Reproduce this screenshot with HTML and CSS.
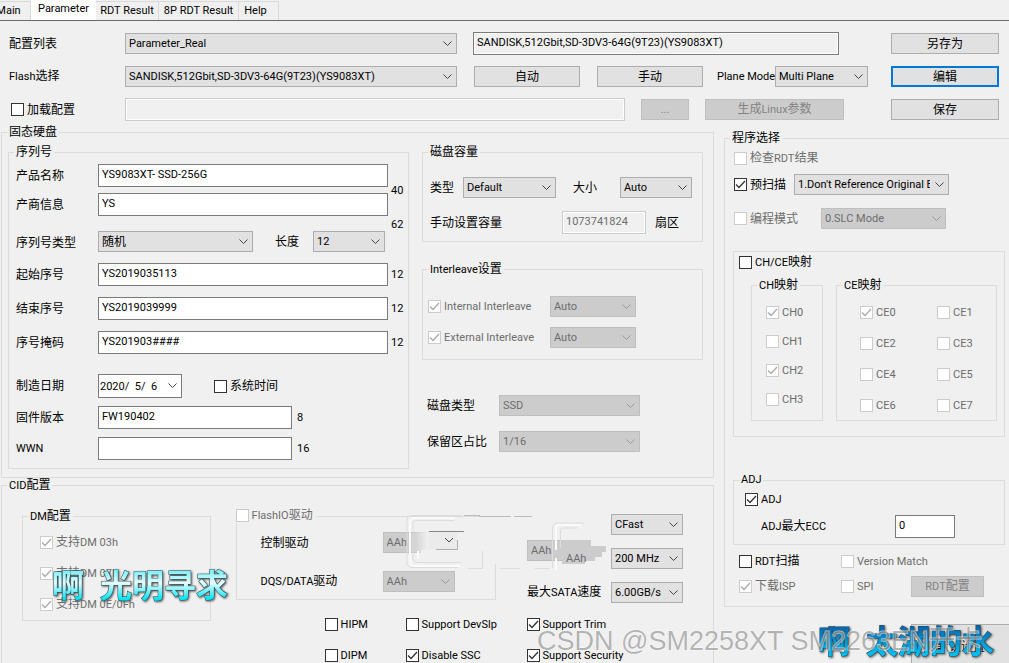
FILE: index.html
```html
<!DOCTYPE html>
<html lang="zh-CN">
<head>
<meta charset="utf-8">
<title>Parameter</title>
<link rel="stylesheet" href="styles.css">
</head>
<body>
<nav class="tabs">
  <button class="tab">Main</button>
  <button class="tab tab-active">Parameter</button>
  <button class="tab tab-rdt">RDT Result</button>
  <button class="tab tab-8p">8P RDT Result</button>
  <button class="tab tab-help">Help</button>
</nav>

<section class="toolbar">
  <div class="bar">
    <label class="bar-label zh" for="cfg">配置列表</label>
    <select class="bar-select" id="cfg"><option>Parameter_Real</option></select>
    <input class="bar-name plain" type="text" aria-label="Flash" value="SANDISK,512Gbit,SD-3DV3-64G(9T23)(YS9083XT)">
    <button class="btn btn-side zh">另存为</button>
  </div>
  <div class="bar">
    <label class="bar-label" for="flash">Flash<span class="zh">选择</span></label>
    <select class="bar-select" id="flash"><option>SANDISK,512Gbit,SD-3DV3-64G(9T23)(YS9083XT)</option></select>
    <div class="bar-group">
      <button class="btn btn-mode zh">自动</button>
      <button class="btn btn-mode zh">手动</button>
      <label class="plane-label" for="plane">Plane Mode</label>
      <select class="plane" id="plane"><option>Multi Plane</option></select>
    </div>
    <button class="btn btn-side btn-default zh">编辑</button>
  </div>
  <div class="bar">
    <label class="bar-label check zh"><input type="checkbox">加载配置</label>
    <input class="bar-path" type="text" aria-label="路径" disabled>
    <button class="btn btn-browse" disabled>...</button>
    <button class="btn btn-linux" disabled><span class="zh">生成</span>Linux<span class="zh">参数</span></button>
    <button class="btn btn-side zh">保存</button>
  </div>
</section>

<main class="main">
  <div class="left">
    <fieldset class="box ssd">
      <legend class="zh">固态硬盘</legend>
      <div class="ssd-grid">
        <fieldset class="box serial">
          <legend class="zh">序列号</legend>
          <div class="serial-grid">
            <label class="zh" for="product">产品名称</label>
            <input type="text" id="product" value="YS9083XT- SSD-256G">
            <label class="zh" for="vendor">产商信息</label>
            <input type="text" id="vendor" value="YS">
            <span class="count count-product">40</span>
            <span class="count count-vendor">62</span>
            <label class="zh" for="sntype">序列号类型</label>
            <div class="inline">
              <select class="sn-type zh" id="sntype"><option>随机</option></select>
              <label class="len-label zh" for="len">长度</label>
              <select class="w72" id="len"><option>12</option></select>
            </div>
            <label class="zh" for="start">起始序号</label>
            <input type="text" id="start" value="YS2019035113"><span class="count">12</span>
            <label class="zh" for="end">结束序号</label>
            <input type="text" id="end" value="YS2019039999"><span class="count">12</span>
            <label class="zh" for="mask">序号掩码</label>
            <input type="text" id="mask" value="YS201903####"><span class="count">12</span>
            <label class="zh" for="date">制造日期</label>
            <div class="inline">
              <input class="date" type="text" id="date" value="2020/  5/  6">
              <label class="check systime zh"><input type="checkbox">系统时间</label>
            </div>
            <label class="zh" for="fw">固件版本</label>
            <div class="inline"><input class="fw" type="text" id="fw" value="FW190402"><span class="fw-count">8</span></div>
            <label for="wwn">WWN</label>
            <div class="inline"><input class="fw" type="text" id="wwn"><span class="fw-count">16</span></div>
          </div>
        </fieldset>

        <div class="disk">
          <fieldset class="box capacity">
            <legend class="zh">磁盘容量</legend>
            <div class="inline">
              <label class="cap-type zh" for="captype">类型</label>
              <select class="w93" id="captype"><option>Default</option></select>
              <label class="cap-size zh" for="capsize">大小</label>
              <select class="w72" id="capsize"><option>Auto</option></select>
            </div>
            <div class="inline">
              <label class="cap-manual zh" for="sectors">手动设置容量</label>
              <input class="sectors" type="text" id="sectors" value="1073741824" disabled>
              <span class="zh">扇区</span>
            </div>
          </fieldset>
          <fieldset class="box interleave">
            <legend>Interleave<span class="zh">设置</span></legend>
            <div class="inline">
              <label class="check off"><input type="checkbox" checked disabled>Internal Interleave</label>
              <select class="w86" aria-label="Internal" disabled><option>Auto</option></select>
            </div>
            <div class="inline">
              <label class="check off"><input type="checkbox" checked disabled>External Interleave</label>
              <select class="w86" aria-label="External" disabled><option>Auto</option></select>
            </div>
          </fieldset>
          <div class="disk-extra">
            <label class="zh" for="dtype">磁盘类型</label>
            <select id="dtype" disabled><option>SSD</option></select>
            <label class="zh" for="reserve">保留区占比</label>
            <select id="reserve" disabled><option>1/16</option></select>
          </div>
        </div>
      </div>
    </fieldset>

    <fieldset class="box cid">
      <legend>CID<span class="zh">配置</span></legend>
      <div class="cid-grid">
        <fieldset class="box dm">
          <legend>DM<span class="zh">配置</span></legend>
          <label class="check off"><input type="checkbox" checked disabled><span><span class="zh">支持</span>DM 03h</span></label>
          <label class="check off"><input type="checkbox" checked disabled><span><span class="zh">支持</span>DM 07h</span></label>
          <label class="check off"><input type="checkbox" checked disabled><span><span class="zh">支持</span>DM 0E/0Fh</span></label>
        </fieldset>
        <fieldset class="box flashio">
          <legend><label class="check off"><input type="checkbox" disabled><span>FlashIO<span class="zh">驱动</span></span></label></legend>
          <div class="drive-grid">
            <label class="zh" for="ctl">控制驱动</label>
            <select class="ctl" id="ctl" disabled><option>AAh</option></select>
            <label for="dqs">DQS/DATA<span class="zh">驱动</span></label>
            <select class="w72" id="dqs" disabled><option>AAh</option></select>
          </div>
        </fieldset>
        <div class="speed">
          <select class="aah" aria-label="AAh" disabled><option>AAh</option></select>
          <select class="w72 speed-value" aria-label="CFast"><option>CFast</option></select>
          <select class="w72 speed-value" aria-label="MHz"><option>200 MHz</option></select>
          <label for="sata"><span class="zh">最大</span>SATA<span class="zh">速度</span></label>
          <select class="w72 speed-value" id="sata"><option>6.00GB/s</option></select>
        </div>
        <div class="features">
          <label class="check"><input type="checkbox">HIPM</label>
          <label class="check"><input type="checkbox">Support DevSlp</label>
          <label class="check"><input type="checkbox" checked>Support Trim</label>
          <label class="check"><input type="checkbox">DIPM</label>
          <label class="check"><input type="checkbox" checked>Disable SSC</label>
          <label class="check"><input type="checkbox" checked>Support Security</label>
        </div>
      </div>
    </fieldset>
  </div>

  <div class="right">
    <fieldset class="box program">
      <legend class="zh">程序选择</legend>
      <div class="prog-row">
        <label class="check off"><input type="checkbox" disabled><span><span class="zh">检查</span>RDT<span class="zh">结果</span></span></label>
      </div>
      <div class="prog-row prog-scan">
        <label class="check zh"><input type="checkbox" checked>预扫描</label>
        <select class="scan" aria-label="预扫描"><option>1.Don't Reference Original Bad</option></select>
      </div>
      <div class="prog-row prog-mode">
        <label class="check off zh"><input type="checkbox" disabled>编程模式</label>
        <select class="mode" aria-label="编程模式" disabled><option>0.SLC Mode</option></select>
      </div>

      <div class="mapping">
        <label class="check map-check"><input type="checkbox"><span>CH/CE<span class="zh">映射</span></span></label>
        <div class="map-grid">
          <fieldset class="box ch">
            <legend>CH<span class="zh">映射</span></legend>
            <label class="check off"><input type="checkbox" checked disabled>CH0</label>
            <label class="check off"><input type="checkbox" disabled>CH1</label>
            <label class="check off"><input type="checkbox" checked disabled>CH2</label>
            <label class="check off"><input type="checkbox" disabled>CH3</label>
          </fieldset>
          <fieldset class="box ce">
            <legend>CE<span class="zh">映射</span></legend>
            <div class="ce-grid">
              <label class="check off"><input type="checkbox" checked disabled>CE0</label>
              <label class="check off"><input type="checkbox" disabled>CE1</label>
              <label class="check off"><input type="checkbox" disabled>CE2</label>
              <label class="check off"><input type="checkbox" disabled>CE3</label>
              <label class="check off"><input type="checkbox" disabled>CE4</label>
              <label class="check off"><input type="checkbox" disabled>CE5</label>
              <label class="check off"><input type="checkbox" disabled>CE6</label>
              <label class="check off"><input type="checkbox" disabled>CE7</label>
            </div>
          </fieldset>
        </div>
      </div>

      <fieldset class="box adj">
        <legend>ADJ</legend>
        <label class="check"><input type="checkbox" checked>ADJ</label>
        <div class="adj-row">
          <label for="ecc">ADJ<span class="zh">最大</span>ECC</label>
          <input type="text" id="ecc" value="0">
        </div>
      </fieldset>

      <div class="misc">
        <label class="check"><input type="checkbox"><span>RDT<span class="zh">扫描</span></span></label>
        <label class="check off version"><input type="checkbox" disabled>Version Match</label>
        <label class="check off"><input type="checkbox" checked disabled><span><span class="zh">下载</span>ISP</span></label>
        <label class="check off"><input type="checkbox" disabled>SPI</label>
        <button class="btn" disabled>RDT<span class="zh">配置</span></button>
      </div>
    </fieldset>
    <button class="btn reset zh">默认设置</button>
  </div>
</main>

<svg class="overlay" width="1009" height="663" viewBox="0 0 1009 663" aria-hidden="true">
  <defs>
    <linearGradient id="cyan" x1="0" y1="0" x2="0" y2="1">
      <stop offset="0.25" stop-color="#7ff0f8"/><stop offset="0.5" stop-color="#e8fcff"/><stop offset="0.85" stop-color="#00e4f4"/>
    </linearGradient>
    <linearGradient id="blue" x1="0" y1="0" x2="0" y2="1">
      <stop offset="0.2" stop-color="#0860a8"/><stop offset="0.85" stop-color="#00c0f4"/>
    </linearGradient>
    <linearGradient id="fade" x1="0" y1="0" x2="1" y2="0">
      <stop offset="0" stop-color="#f0f0f0" stop-opacity="0"/><stop offset="1" stop-color="#f0f0f0"/>
    </linearGradient>
  </defs>
  <path fill="#f0f0f0" d="M428 532h31v20h-31zM421 550h40v5h-40zM492 514h8v50h-8z"/>
  <path fill="url(#fade)" d="M412 530h16v24h-16z"/>
  <path fill="#ebebeb" d="M428 532h29v17h-29z"/>
  <path fill="none" stroke="#b0b0b0" d="M457.500 540v9.500H436"/>
  <path fill="none" stroke="#888" d="M429 531.500h35"/>
  <path fill="none" stroke="#444" d="m445 538 4 4 4-4"/>
  <path fill="#ccc" d="M562 540h29v6h15v6h-4v5h-7v4h-10v3h-23z"/>
  <text class="ghost" x="566" y="562">AAh</text>
  <g fill="none">
    <path stroke="#fafafa" stroke-width="2" d="M455 518h-40q-5 0-5 5v38q0 5 5 5h45M556 550v-22q0-3 3-3h22M556 558v12M418 551v8"/>
    <path stroke="#ddd" d="M462 515.500h-50q-5 0-5 5v42q0 5 5 5h46M455 520.500h-39q-3 0-3 3v35q0 4 4 4h44M552.500 568v-39q0-6 6-6h26M560.500 548v-17q0-3 3-3h14M468 568.500h15M500 568.500h20M535 568.500h14M482.500 551v17"/>
    <path stroke="#bbb" d="M464 515.500h16M479 516.500h32M514 516.500h18"/>
  </g>
  <g class="stamp">
    <text x="52" y="597" fill="url(#cyan)">啊</text>
    <text x="100" y="597" fill="url(#cyan)">光明寻求</text>
    <text x="818" y="653" fill="url(#blue)">啊</text>
    <text x="866" y="653" fill="url(#blue)">太湖的水</text>
  </g>
  <text class="csdn" x="537" y="650">CSDN @SM2258XT SM2263EN开卡</text>
</svg>
</body>
</html>
```

FILE: styles.css
```css
* { box-sizing: border-box; }

html { background: #f0f0f0; }

body {
  margin: 0;
  height: 100vh;
  overflow: hidden;
  position: relative;
  background: #f0f0f0;
  color: #000;
  font: 11px/14px Roboto, "Noto Sans CJK SC", sans-serif;
}

button, input, select { font: inherit; color: inherit; margin: 0; }
label, legend, span, button { white-space: nowrap; }

.zh { font-size: 12px; }

/* Controls */
input[type="text"] {
  height: 23px;
  min-width: 0;
  padding: 0 3px 3px;
  border: 1px solid #7a7a7a;
  border-radius: 0;
  background: #fff;
}
input[type="text"].plain { background: #f0f0f0; box-shadow: inset 0 0 0 1px #fff; }
input[type="text"]:disabled {
  background: #f0f0f0;
  border-color: #ccc;
  box-shadow: inset 0 0 0 1px #fff;
  color: #6d6d6d;
}

select {
  appearance: none;
  height: 21px;
  min-width: 0;
  padding: 0 18px 0 3px;
  border: 1px solid #adadad;
  border-radius: 0;
  background: #e1e1e1 url("data:image/svg+xml,%3Csvg xmlns='http://www.w3.org/2000/svg' width='9' height='6'%3E%3Cpath d='M.5.5l4 4 4-4' fill='none' stroke='%23444'/%3E%3C/svg%3E") no-repeat right 4px center;
}
select:disabled {
  opacity: 1;
  color: #6d6d6d;
  border-color: #bfbfbf;
  background: #ccc url("data:image/svg+xml,%3Csvg xmlns='http://www.w3.org/2000/svg' width='9' height='6'%3E%3Cpath d='M.5.5l4 4 4-4' fill='none' stroke='%23999'/%3E%3C/svg%3E") no-repeat right 4px center;
}

.btn {
  height: 21px;
  padding: 0;
  border: 1px solid #adadad;
  background: #e1e1e1;
}
.btn-default { border: 2px solid #0078d7; }
.btn:disabled { background: #ccc; border-color: #bfbfbf; color: #838383; }

.check { display: flex; align-items: center; gap: 3px; height: 13px; }
.check input {
  appearance: none;
  flex: none;
  width: 13px;
  height: 13px;
  border: 1px solid #333;
  background: #fff;
}
.check input:checked {
  background: #fff url("data:image/svg+xml,%3Csvg xmlns='http://www.w3.org/2000/svg' width='11' height='11'%3E%3Cpath d='M1 5.500l3 3 6-6.500' fill='none' stroke='%23333' stroke-width='1.300'/%3E%3C/svg%3E") center no-repeat;
}
.check input:disabled { border-color: #ccc; }
.check input:checked:disabled {
  background-image: url("data:image/svg+xml,%3Csvg xmlns='http://www.w3.org/2000/svg' width='11' height='11'%3E%3Cpath d='M1 5.500l3 3 6-6.500' fill='none' stroke='%23aaa' stroke-width='1.300'/%3E%3C/svg%3E");
}
.off { color: #6d6d6d; }

/* --pad is the left padding; the legend starts 6px in from the border whatever it is */
.box { --pad: 0px; min-width: 0; margin: 0; padding: 0 0 0 var(--pad); border: 1px solid #dcdcdc; }
.box > legend { height: 14px; margin-left: calc(5px - var(--pad)); padding: 0 2px; }

.inline { display: flex; align-items: center; }
.w72 { width: 72px; }
.w86 { width: 86px; }
.w93 { width: 93px; }

/* Tabs */
.tabs {
  display: flex;
  align-items: flex-end;
  height: 21px;
  margin-left: -13px;
  border-bottom: 1px solid #696969;
}
.tab {
  height: 19px;
  width: 44px;
  padding: 0;
  border: 1px solid #d9d9d9;
  border-width: 1px 1px 0 0;
  background: #f0f0f0;
}
.tab-active { width: 65px; height: 20px; padding-bottom: 2px; background: #fff; border: 0; }
.tab-rdt { width: 63px; }
.tab-8p { width: 80px; }
.tab-help { width: 40px; padding-right: 6px; }

/* Toolbar */
.toolbar { display: grid; gap: 10px; padding: 11px 10px 4px 9px; }
.bar { display: flex; align-items: center; height: 23px; }
.bar-label { flex: none; width: 116px; }
.bar-label.check { padding-left: 2px; }
.bar-select { flex: 309 1 0; }
.bar-name { flex: 358 1 0; margin-left: 16px; }
.btn-side { flex: none; width: 108px; margin-left: auto; }
.bar-name + .btn-side { margin-left: 52px; }
.bar-group { flex: 394 1 0; display: flex; align-items: center; margin: 0 23px 0 17px; }
.btn-mode { flex: 1; }
.btn-mode + .btn-mode { margin-left: 17px; }
.plane-label { width: 58px; margin-left: 14px; }
.plane { width: 93px; }
.bar-path { flex: 1; }
.btn-browse { width: 48px; margin-left: 16px; }
.btn-linux { width: 139px; margin: 0 47px 0 16px; }

/* Columns */
.main {
  display: grid;
  grid-template-columns: minmax(0, 713fr) minmax(0, 285fr);
  gap: 10px;
  padding-left: 1px;
}

.ssd { --pad: 6px; padding-top: 6px; padding-right: 10px; padding-bottom: 8px; }
.ssd-grid {
  display: grid;
  grid-template-columns: minmax(0, 401fr) minmax(0, 281fr);
  gap: 13px;
}

.serial { --pad: 7px; padding-top: 5px; padding-right: 20px; padding-bottom: 8px; }
.serial-grid {
  display: grid;
  grid-template-columns: 82px minmax(0, 1fr) 0;
  grid-template-rows: 29px 38px 32px 34px 34px 43px 32px 31px 23px;
  align-items: start;
}
.serial-grid > label { grid-column: 1; line-height: 24px; }
.count { grid-column: 3; line-height: 23px; margin-left: 3px; }
.count-product { grid-row: 1 / 3; align-self: center; padding-bottom: 14px; }
.count-vendor { grid-row: 2 / 4; align-self: center; padding-bottom: 8px; }
.sn-type { width: 155px; }
.len-label { width: 38px; margin-left: 22px; }
.date { width: 84px; white-space: pre; }
input[type="text"].date {
  height: 24px;
  padding: 0 1px;
  background: #fff url("data:image/svg+xml,%3Csvg xmlns='http://www.w3.org/2000/svg' width='9' height='6'%3E%3Cpath d='M.5.5l4 4 4-4' fill='none' stroke='%23444'/%3E%3C/svg%3E") no-repeat right 4px center;
}
.systime { margin-left: 32px; }
.fw { width: 194px; }
.fw-count { margin-left: 5px; }

.capacity { --pad: 7px; display: grid; gap: 13px; padding-top: 18px; padding-right: 10px; padding-bottom: 7px; }
.cap-type { width: 33px; }
.cap-size { width: 47px; margin-left: 17px; }
.capacity .w72 { margin-left: auto; }
.cap-manual { width: 132px; }
.sectors { width: 84px; margin-right: 9px; }
.interleave { --pad: 5px; display: grid; gap: 10px; margin-top: 20px; padding-top: 20px; padding-bottom: 11px; }
.interleave .check { width: 122px; }
.disk-extra {
  display: grid;
  grid-template-columns: 72px 141px;
  gap: 15px 0;
  align-items: center;
  margin-top: 35px;
  padding-left: 5px;
}

/* CID */
.cid { --pad: 20px; padding-top: 17px; padding-right: 30px; padding-bottom: 30px; }
.cid-grid {
  display: grid;
  grid-template-columns: minmax(0, 189fr) 25px minmax(0, 261fr) 31px 156px;
  grid-template-rows: auto auto;
}
.dm { --pad: 17px; grid-row: 1 / 3; align-self: start; display: grid; gap: 18px; padding-top: 13px; padding-bottom: 9px; }
.flashio { --pad: 24px; grid-column: 3; align-self: start; padding-top: 9px; padding-bottom: 7px; }
.flashio > legend { margin-left: calc(-1px - var(--pad)); padding: 0 3px 0 0; background: #f0f0f0; }
.drive-grid {
  display: grid;
  grid-template-columns: 122px 75px;
  gap: 18px 0;
  align-items: center;
}
.speed {
  grid-column: 5;
  display: grid;
  grid-template-columns: minmax(0, 1fr) 72px;
  gap: 13px 0;
  align-content: start;
  align-items: center;
  padding-top: 5px;
}
.speed-value { grid-column: 2; }
.aah { grid-area: 1 / 1 / 3 / 2; width: 36px; margin-top: 18px; padding-right: 0; }
.aah:disabled { background-image: none; }
.features {
  grid-column: 3 / 6;
  display: grid;
  grid-template-columns: 81px 121px 100px;
  gap: 18px 0;
  margin-top: 15px;
  padding-left: 89px;
}

/* Program column */
.right { padding-top: 6px; }
.program { --pad: 8px; padding-top: 3px; padding-right: 4px; padding-bottom: 9px; border-right: 0; }
.prog-row { display: flex; align-items: center; height: 21px; padding-left: 1px; }
.prog-scan { margin-top: 5px; }
.prog-scan .check { width: 60px; }
.prog-mode { margin-top: 13px; }
.prog-mode .check { width: 87px; }
.scan { width: 155px; }
.mode { width: 125px; }

.mapping { margin-top: 22px; padding: 4px 7px 15px 17px; border: 1px solid #dcdcdc; }
.map-check { margin: 0 0 9px -12px; }
.map-grid { display: grid; grid-template-columns: minmax(0, 72fr) minmax(0, 161fr); gap: 13px; }
.ch { --pad: 14px; display: grid; gap: 16px; align-content: start; padding-top: 14px; padding-bottom: 8px; }
.ce { --pad: 23px; padding-top: 14px; padding-bottom: 8px; }
.ce-grid { display: grid; grid-template-columns: 77px 50px; gap: 18px 0; }

.adj { --pad: 11px; margin-top: 36px; padding-top: 6px; padding-bottom: 6px; }
.adj-row { display: flex; align-items: center; margin-top: 9px; padding-left: 16px; }
.adj-row label { width: 134px; }
.adj-row input { width: 60px; }

.misc {
  display: grid;
  grid-template-columns: 102px 70px 73px;
  gap: 8px 0;
  align-items: center;
  margin-top: 10px;
  padding-left: 6px;
}
.version { grid-column: 2 / 4; }
.reset { width: 100px; height: 45px; margin: 17px 0 0 187px; }

/* Marks lying over the form */
.overlay { position: absolute; left: 0; top: 0; pointer-events: none; }
.ghost { fill: #6d6d6d; font-size: 11px; }
.stamp { filter: drop-shadow(1px 1px 1px #555); }
.stamp text {
  font: bold 32px "Noto Sans CJK SC", sans-serif;
  stroke: #2c4c54;
  stroke-width: 1px;
  paint-order: stroke;
}
.csdn {
  font: 27px "Liberation Sans", "Noto Sans CJK SC", sans-serif;
  fill: #888;
  fill-opacity: .6;
  stroke: #fff;
  stroke-opacity: .6;
  stroke-width: 1px;
  paint-order: stroke;
}
```
